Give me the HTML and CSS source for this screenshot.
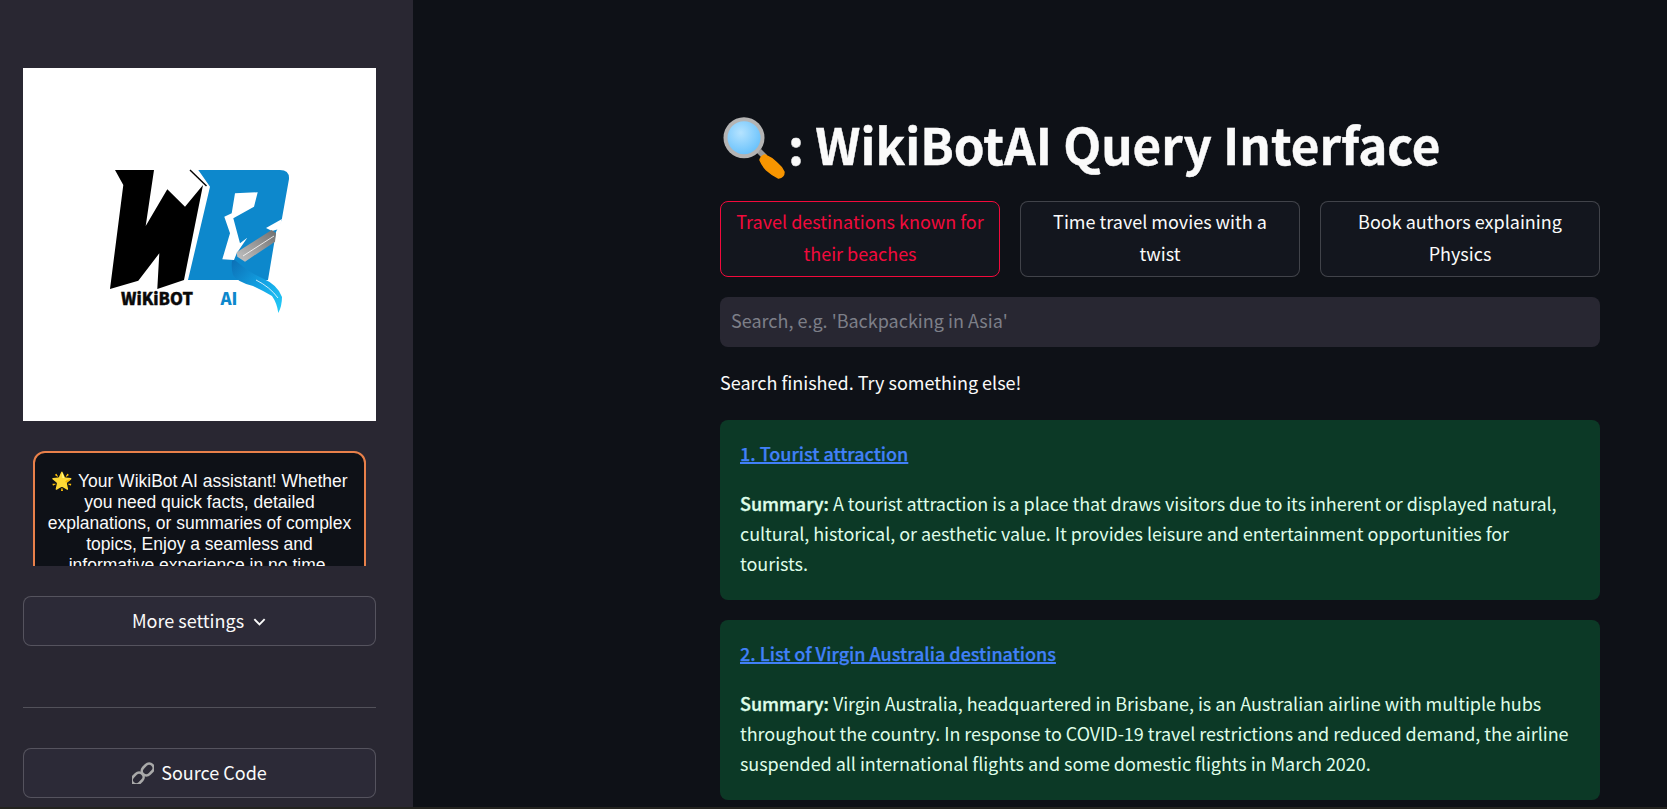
FILE: index.html
```html
<!DOCTYPE html>
<html lang="en">
<head>
<meta charset="utf-8">
<title>WikiBotAI Query Interface</title>
<link rel="stylesheet" href="styles.css">
</head>
<body>
<div class="app">
  <aside class="sidebar">
    <div class="logo">
      <svg viewBox="23 68 353 353" width="353" height="353" aria-hidden="true">
        <defs>
          <linearGradient id="steel" x1="0" y1="1" x2="1" y2="0"><stop offset="0" stop-color="#c4c4c4"/><stop offset="1" stop-color="#6f6f6f"/></linearGradient>
          <linearGradient id="wave" x1="0" y1="0" x2="1" y2="1"><stop offset="0" stop-color="#0c6fb5"/><stop offset=".55" stop-color="#13a5e6"/><stop offset="1" stop-color="#25cdf8"/></linearGradient>
        </defs>
        <path fill="#000" d="M115 170H154L145.700 226L167.300 189.300L185 206.700L203 185L184 280L157.300 289L159.300 253.300L138.300 280.700L110 289L123.300 185Z"/>
        <path fill="none" stroke="#000" stroke-width="1.400" d="M190 170L206.500 186"/>
        <path fill="#0d88cc" d="M198.300 170H280Q289.500 170 289 179L281.700 220L276 232L268 280H188L210 186.700Z"/>
        <path fill="#fff" d="M235 193.300L257.700 192.300L254 206.700L233.300 218.300L240 243.300L247.300 237.700L236.700 253.300L234 260L222.300 259.300L230 233.300L224.300 216.700L231.700 213.300Z"/>
        <path fill="#fff" d="M282 219L266 228L272 231L279 229Z"/>
        <path fill="url(#steel)" d="M236.700 252.300L271.700 230L276 233.300L275 241.700L245 261.700L237.300 256.700Z"/>
        <path fill="none" stroke="#fff" stroke-width=".8" d="M243 256L274 236"/>
        <path fill="url(#wave)" d="M232 261Q234 259 236 261Q248 272 262 278Q278 285 282 297Q282 306 278.300 313Q277 303 272 296Q262 290 253 286Q237 282 233 275Q231 268 232 261Z"/>
        <path fill="none" stroke="#fff" stroke-width=".8" d="M256 280Q270 287 278 298"/>
        <text class="logo-word" x="121" y="305" textLength="72" lengthAdjust="spacingAndGlyphs">WiKiBOT</text>
        <text class="logo-ai" x="220.500" y="305" textLength="17" lengthAdjust="spacingAndGlyphs">AI</text>
      </svg>
    </div>
    <div class="about-clip">
      <div class="about">🌟 Your WikiBot AI assistant! Whether you need quick facts, detailed explanations, or summaries of complex topics, Enjoy a seamless and informative experience in no time.</div>
    </div>
    <button class="side-btn settings-btn">More settings
      <svg class="chev" viewBox="0 0 16 16" width="15" height="15" aria-hidden="true"><path d="M2.500 5.500l5.500 5.500 5.500-5.500" fill="none" stroke="currentColor" stroke-width="2"/></svg>
    </button>
    <hr class="rule">
    <button class="side-btn source-btn">
      <svg class="chain" viewBox="0 0 22 22" width="22" height="22" aria-hidden="true">
        <g fill="none" stroke="#a9a9a9" stroke-width="2.600">
          <rect x="9.200" y="3" width="13" height="9" rx="4.500" transform="rotate(-45 15.700 7.500)"/>
          <rect x="-.8" y="12" width="13" height="9" rx="4.500" transform="rotate(-45 5.700 16.500)"/>
        </g>
      </svg>
      Source Code
    </button>
  </aside>
  <main class="main">
    <div class="content">
      <h1 class="title">
        <svg class="lens" viewBox="6 5 64 64" width="64" height="64" aria-hidden="true">
          <defs><radialGradient id="glass" cx=".4" cy=".35" r=".8"><stop offset="0" stop-color="#b5e3ff"/><stop offset="1" stop-color="#5cbcfb"/></radialGradient></defs>
          <path d="M42 43L46 39L52 45L48 49Z" fill="#9a9a9a"/>
          <path d="M45 50Q46 46 50 45Q57 48 62 53Q67 57 69 62Q69 67 63.500 68Q57 65 51.500 60Q47 55 45 50Z" fill="#f79500" stroke="#f79500" stroke-width="1.500" stroke-linejoin="round"/>
          <circle cx="29" cy="27.700" r="20.500" fill="#b4b4b4"/>
          <circle cx="29" cy="27.700" r="16.500" fill="url(#glass)"/>
        </svg>
        <span>: WikiBotAI Query Interface</span>
      </h1>
      <div class="suggestions">
        <button class="chip chip-active">Travel destinations known for their beaches</button>
        <button class="chip">Time travel movies with a twist</button>
        <button class="chip">Book authors explaining Physics</button>
      </div>
      <input class="search" type="text" placeholder="Search, e.g. 'Backpacking in Asia'">
      <p class="status">Search finished. Try something else!</p>
      <article class="result">
        <a class="result-link" href="#">1. Tourist attraction</a>
        <p class="summary"><strong>Summary:</strong> A tourist attraction is a place that draws visitors due to its inherent or displayed natural, cultural, historical, or aesthetic value. It provides leisure and entertainment opportunities for tourists.</p>
      </article>
      <article class="result">
        <a class="result-link" href="#">2. List of Virgin Australia destinations</a>
        <p class="summary"><strong>Summary:</strong> Virgin Australia, headquartered in Brisbane, is an Australian airline with multiple hubs throughout the country. In response to COVID-19 travel restrictions and reduced demand, the airline suspended all international flights and some domestic flights in March 2020.</p>
      </article>
    </div>
  </main>
</div>
</body>
</html>
```
FILE: styles.css
```css
* { box-sizing: border-box; }
html, body { margin: 0; height: 100%; overflow: hidden; background: #23231f; }
body { font-family: "Noto Sans CJK SC", "Noto Sans", sans-serif; color: #fafafa; font-size: 18px; }
.app { display: flex; height: 807px; overflow: hidden; background: #0e1117; }
.sidebar { width: 413px; flex: none; background: #292732; padding: 68px 37px 0 23px; display: flex; flex-direction: column; }
.logo { background: #fff; width: 353px; height: 353px; flex: none; }
.logo svg { display: block; }
.logo-word { font: 900 17px "Noto Sans CJK SC", sans-serif; fill: #0a0a0a; stroke: #0a0a0a; stroke-width: .4px; }
.logo-ai { font: 900 17px "Noto Sans CJK SC", sans-serif; fill: #0d88cc; }
.about-clip { height: 115px; margin-top: 30px; padding: 0 10px; overflow: hidden; flex: none; }
.about { background: #0e1117; border: 2px solid #e8804a; border-radius: 12px; padding: 18px 10px; height: 200px; font: 17.500px/21px "Liberation Sans", sans-serif; text-align: center; color: #fafafa; }
.side-btn { width: 353px; height: 50px; flex: none; background: #2c2a37; border: 1px solid rgba(250,250,250,.2); border-radius: 8px; color: #fafafa; font: 18px/28px "Noto Sans CJK SC", sans-serif; display: flex; align-items: center; justify-content: center; gap: 8px; padding: 0 0 2px; }
.settings-btn { margin-top: 30px; }
.source-btn { gap: 7px; padding-bottom: 3px; }
.chev, .chain { flex: none; margin-top: 2px; }
.rule { width: 353px; margin: 61px 0 40px; border: 0; border-top: 1px solid rgba(250,250,250,.2); }
.main { flex: 1; min-width: 0; padding: 112px 67px 0 307px; }
.title { display: flex; align-items: flex-start; height: 64px; margin: 0 0 0 1px; font-size: 49.350px; line-height: 64px; font-weight: 700; white-space: nowrap; -webkit-text-stroke: .4px #fafafa; }
.lens { flex: none; margin-top: 3px; margin-right: 3px; }
.suggestions { display: grid; grid-template-columns: repeat(3, 1fr); gap: 20px; margin-top: 25px; }
.chip { height: 76px; background: #13161e; border: 1px solid rgba(250,250,250,.2); border-radius: 8px; color: #fafafa; font: 18px/32px "Noto Sans CJK SC", sans-serif; padding: 3px 14px 7px; }
.chip-active { border-color: #f20a3c; color: #f20a3c; }
.search { display: block; width: 100%; height: 50px; margin-top: 20px; background: #282732; border: 0; border-radius: 8px; padding: 0 11px 4px; color: #fafafa; font: 18px "Noto Sans CJK SC", sans-serif; }
.search::placeholder { color: #7d7f88; opacity: 1; }
.status { margin: 20px 0 0; line-height: 30px; }
.result { background: #0c3926; color: #dffde9; border-radius: 8px; padding: 18px 24px 0 20px; margin-top: 20px; height: 180px; }
.status + .result { margin-top: 23px; }
.result-link { display: block; width: fit-content; color: #4180f8; font-weight: 500; -webkit-text-stroke: .25px #4180f8; line-height: 30px; text-decoration-thickness: 1.500px; }
.summary { margin: 20px 0 0; line-height: 30px; letter-spacing: -.05px; }
.summary strong { font-weight: 500; -webkit-text-stroke: .35px #dffde9; }
```
